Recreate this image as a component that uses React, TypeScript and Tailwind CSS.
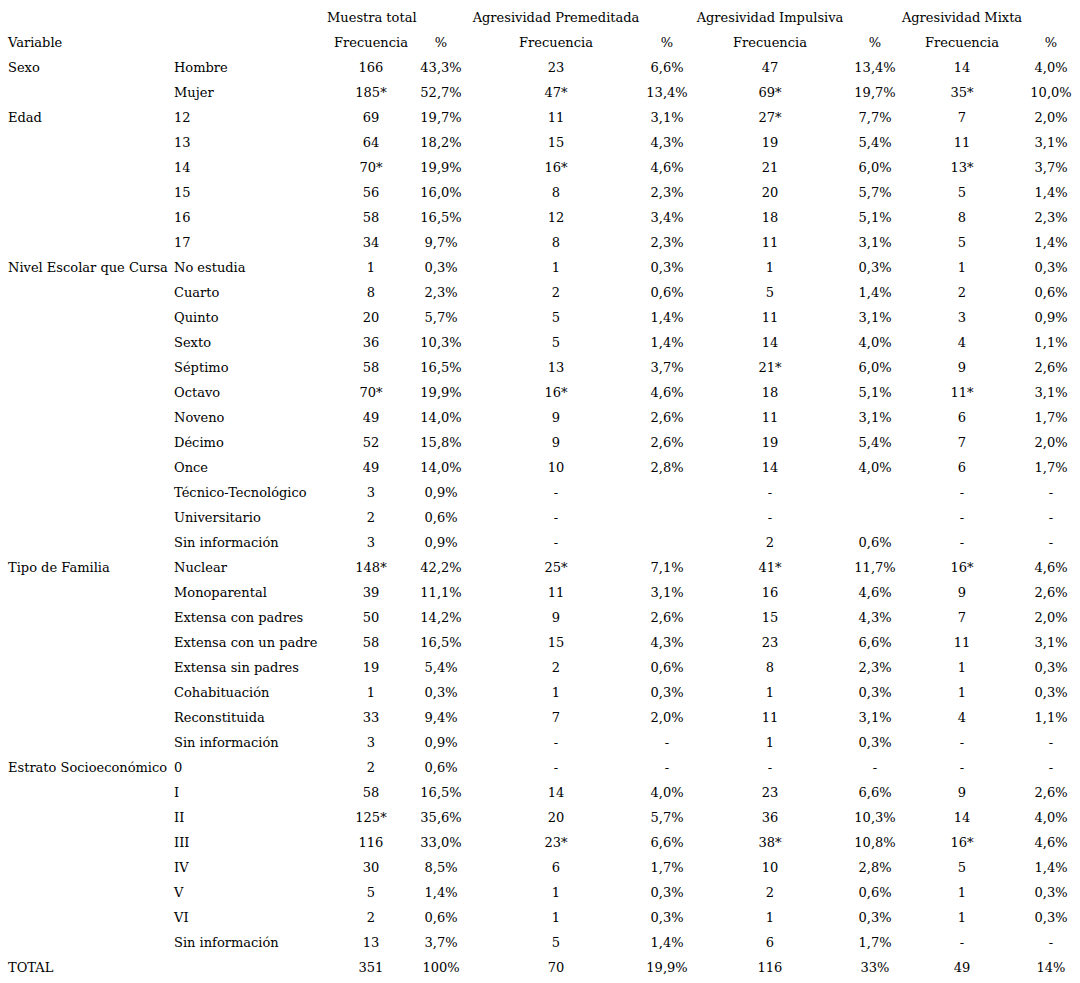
import React from "react";

type Row = [string, string, string, string, string, string, string, string, string, string];

const rows: Row[] = [
  ["Sexo", "Hombre", "166", "43,3%", "23", "6,6%", "47", "13,4%", "14", "4,0%"],
  ["", "Mujer", "185*", "52,7%", "47*", "13,4%", "69*", "19,7%", "35*", "10,0%"],
  ["Edad", "12", "69", "19,7%", "11", "3,1%", "27*", "7,7%", "7", "2,0%"],
  ["", "13", "64", "18,2%", "15", "4,3%", "19", "5,4%", "11", "3,1%"],
  ["", "14", "70*", "19,9%", "16*", "4,6%", "21", "6,0%", "13*", "3,7%"],
  ["", "15", "56", "16,0%", "8", "2,3%", "20", "5,7%", "5", "1,4%"],
  ["", "16", "58", "16,5%", "12", "3,4%", "18", "5,1%", "8", "2,3%"],
  ["", "17", "34", "9,7%", "8", "2,3%", "11", "3,1%", "5", "1,4%"],
  ["Nivel Escolar que Cursa", "No estudia", "1", "0,3%", "1", "0,3%", "1", "0,3%", "1", "0,3%"],
  ["", "Cuarto", "8", "2,3%", "2", "0,6%", "5", "1,4%", "2", "0,6%"],
  ["", "Quinto", "20", "5,7%", "5", "1,4%", "11", "3,1%", "3", "0,9%"],
  ["", "Sexto", "36", "10,3%", "5", "1,4%", "14", "4,0%", "4", "1,1%"],
  ["", "Séptimo", "58", "16,5%", "13", "3,7%", "21*", "6,0%", "9", "2,6%"],
  ["", "Octavo", "70*", "19,9%", "16*", "4,6%", "18", "5,1%", "11*", "3,1%"],
  ["", "Noveno", "49", "14,0%", "9", "2,6%", "11", "3,1%", "6", "1,7%"],
  ["", "Décimo", "52", "15,8%", "9", "2,6%", "19", "5,4%", "7", "2,0%"],
  ["", "Once", "49", "14,0%", "10", "2,8%", "14", "4,0%", "6", "1,7%"],
  ["", "Técnico-Tecnológico", "3", "0,9%", "-", "", "-", "", "-", "-"],
  ["", "Universitario", "2", "0,6%", "-", "", "-", "", "-", "-"],
  ["", "Sin información", "3", "0,9%", "-", "", "2", "0,6%", "-", "-"],
  ["Tipo de Familia", "Nuclear", "148*", "42,2%", "25*", "7,1%", "41*", "11,7%", "16*", "4,6%"],
  ["", "Monoparental", "39", "11,1%", "11", "3,1%", "16", "4,6%", "9", "2,6%"],
  ["", "Extensa con padres", "50", "14,2%", "9", "2,6%", "15", "4,3%", "7", "2,0%"],
  ["", "Extensa con un padre", "58", "16,5%", "15", "4,3%", "23", "6,6%", "11", "3,1%"],
  ["", "Extensa sin padres", "19", "5,4%", "2", "0,6%", "8", "2,3%", "1", "0,3%"],
  ["", "Cohabituación", "1", "0,3%", "1", "0,3%", "1", "0,3%", "1", "0,3%"],
  ["", "Reconstituida", "33", "9,4%", "7", "2,0%", "11", "3,1%", "4", "1,1%"],
  ["", "Sin información", "3", "0,9%", "-", "-", "1", "0,3%", "-", "-"],
  ["Estrato Socioeconómico", "0", "2", "0,6%", "-", "-", "-", "-", "-", "-"],
  ["", "I", "58", "16,5%", "14", "4,0%", "23", "6,6%", "9", "2,6%"],
  ["", "II", "125*", "35,6%", "20", "5,7%", "36", "10,3%", "14", "4,0%"],
  ["", "III", "116", "33,0%", "23*", "6,6%", "38*", "10,8%", "16*", "4,6%"],
  ["", "IV", "30", "8,5%", "6", "1,7%", "10", "2,8%", "5", "1,4%"],
  ["", "V", "5", "1,4%", "1", "0,3%", "2", "0,6%", "1", "0,3%"],
  ["", "VI", "2", "0,6%", "1", "0,3%", "1", "0,3%", "1", "0,3%"],
  ["", "Sin información", "13", "3,7%", "5", "1,4%", "6", "1,7%", "-", "-"],
  ["TOTAL", "", "351", "100%", "70", "19,9%", "116", "33%", "49", "14%"],
];

const header1: Row = ["", "", "Muestra total", "", "Agresividad Premeditada", "", "Agresividad Impulsiva", "", "Agresividad Mixta", ""];
const header2: Row = ["Variable", "", "Frecuencia", "%", "Frecuencia", "%", "Frecuencia", "%", "Frecuencia", "%"];

function Line({ r }: { r: Row }) {
  return (
    <div className="grid grid-cols-[170px_157px_88px_52px_178px_44px_162px_48px_126px_52px] h-[25px] items-center">
      <div className="pl-2 whitespace-nowrap">{r[0]}</div>
      <div className="pl-1 whitespace-nowrap">{r[1]}</div>
      {r.slice(2).map((c, i) => (
        <div key={i} className="text-center whitespace-nowrap">
          {c}
        </div>
      ))}
    </div>
  );
}

export default function App() {
  return (
    <div
      className="w-[1080px] h-[983px] bg-white text-black text-[13px] leading-none pt-[5px]"
      style={{ fontFamily: '"DejaVu Serif", serif' }}
    >
      <Line r={header1} />
      <Line r={header2} />
      {rows.map((r, i) => (
        <Line key={i} r={r} />
      ))}
    </div>
  );
}
